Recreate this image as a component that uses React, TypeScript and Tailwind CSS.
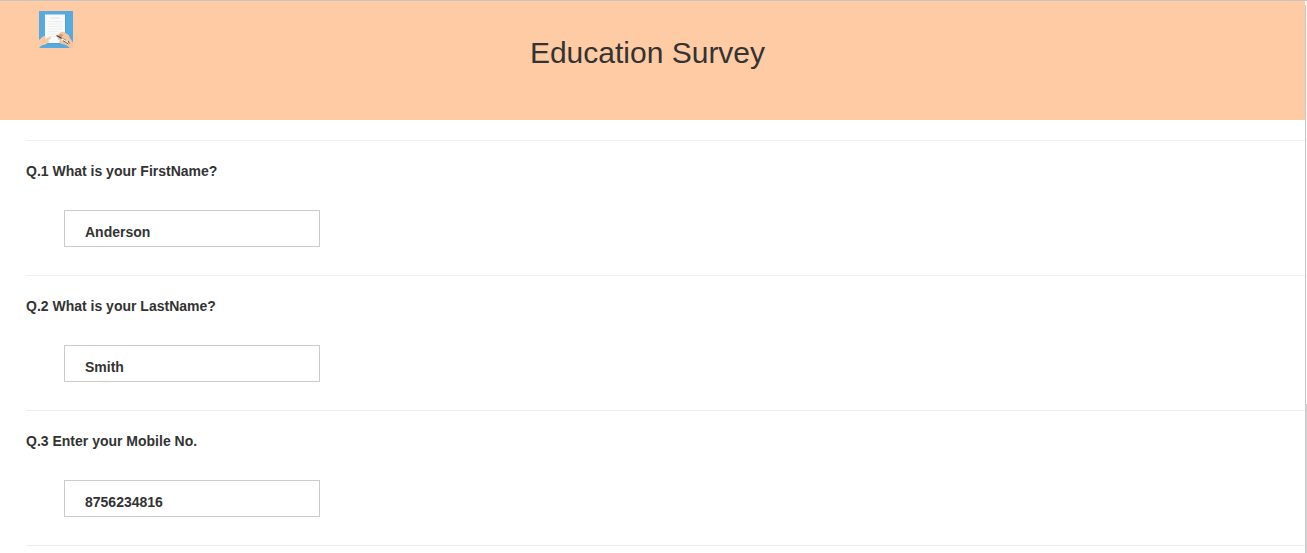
import React from 'react';

type Question = { id: string; label: string; value: string; type: string };

const questions: Question[] = [
  { id: 'first-name', label: 'Q.1 What is your FirstName?', value: 'Anderson', type: 'text' },
  { id: 'last-name', label: 'Q.2 What is your LastName?', value: 'Smith', type: 'text' },
  { id: 'mobile', label: 'Q.3 Enter your Mobile No.', value: '8756234816', type: 'tel' },
];

function SurveyLogo() {
  return (
    <svg className="block h-[37px] w-[34px]" viewBox="0 0 34 37" aria-hidden="true">
      <rect width="34" height="37" fill="#56aadf" />
      <path d="M6 4h21v29H6z" fill="#4f9fd3" />
      <path d="M6 3.5h20v28.500H6z" fill="#fafafa" />
      <path d="M11.500 7h9" stroke="#dfe1e3" strokeWidth="1" />
      <path
        d="M8.500 10.500h15M8.500 13h15M8.500 15.500h15M8.500 18h15M8.500 20.500h11M8.500 23h10M8.500 25.500h9"
        stroke="#eceeef"
        strokeWidth="1"
      />
      <path
        d="M0 29 4 25.500q1.500-1.200 2.800 0l-.8 2.200 4.500-1.700q2.500 0 1.200 1.800l-2.700 1.700q2 .3.800 1.800l-3 2-4.300 1.200L0 37z"
        fill="#f6cda7"
      />
      <path d="M5.500 28.200 3.800 31" fill="none" stroke="#e3b38c" strokeWidth=".6" />
      <path
        d="m18 24.500 3.500-3.200q1.700-1 3.500-.2l4.300 2.700q1.200 1 1.400 3L34 31.500V37h-3l-4-3-5.500-1.400-1.700-1.500 1.200-1.500-2-1z"
        fill="#f5c69e"
      />
      <path d="m19 25 3-2.200 2.500 1.200-2 2 1 2-3.500-1.200z" fill="#cf9b75" />
      <path d="m17.500 24.500 9.500 5.300" stroke="#464247" strokeWidth="1.300" />
      <path d="m22.500 27.800 7.500 4.700" stroke="#f5f5f5" strokeWidth="1.600" />
      <path d="m24 29.700 5.500 3.300M29.300 30l1 2.500" fill="none" stroke="#5f4c49" strokeWidth=".9" />
    </svg>
  );
}

function QuestionBlock({ question }: { question: Question }) {
  return (
    <div className="flex flex-col items-start border-t border-[#eeeeee] pt-5 pb-7">
      <label htmlFor={question.id} className="leading-5">
        {question.label}
      </label>
      <input
        id={question.id}
        type={question.type}
        defaultValue={question.value}
        className="mt-[29px] ml-[38px] h-[37px] w-64 max-w-full border border-[#cccccc] bg-white px-5 pt-[7px] font-bold outline-none"
      />
    </div>
  );
}

export default function App() {
  return (
    <div className="flex min-h-screen border-t border-[#c4c4c4] bg-white font-['Liberation_Sans',Arial,sans-serif] text-sm font-bold text-[#333333]">
      <div className="min-w-0 flex-1">
        <header className="grid h-[119px] grid-cols-[1fr_auto_1fr] bg-[#ffcba4] pr-[10px]">
          <div className="pt-[10px] pl-[39px]">
            <SurveyLogo />
          </div>
          <h1 className="pt-[35px] text-[30px] leading-[33px] font-normal">Education Survey</h1>
        </header>
        <form className="mt-5 ml-[26px]">
          {questions.map((question) => (
            <QuestionBlock key={question.id} question={question} />
          ))}
          <hr className="border-[#eeeeee]" />
        </form>
      </div>
      <div className="flex w-[2px] flex-col bg-[#fafafa] pt-1" aria-hidden="true">
        <div className="flex flex-1 flex-col border-l border-[#c8c8c8] pt-[399px]">
          <div className="flex-1 bg-[#d2d2d2]" />
        </div>
      </div>
    </div>
  );
}
